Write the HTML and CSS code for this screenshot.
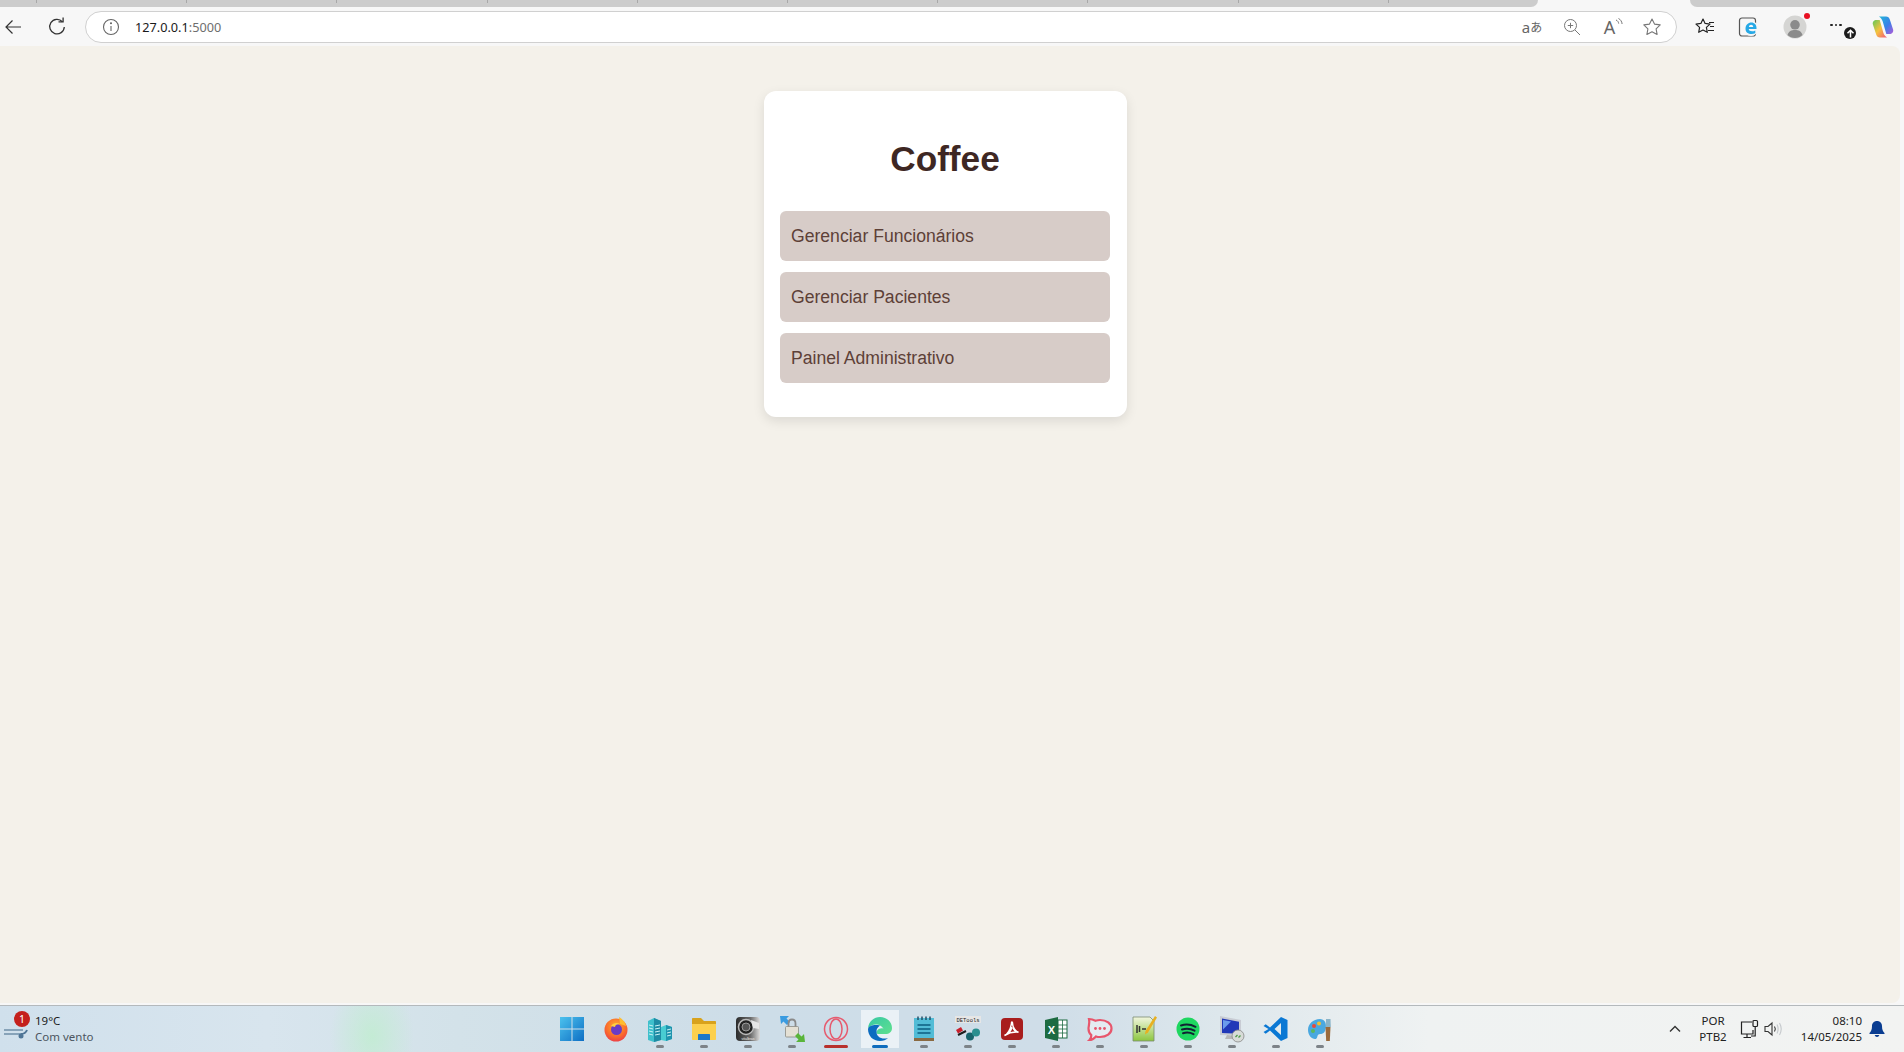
FILE: index.html
```html
<!DOCTYPE html>
<html lang="pt-BR">
<head>
<meta charset="utf-8">
<title>Coffee</title>
<link rel="stylesheet" href="styles.css">
</head>
<body>
<div class="tabstrip">
  <div class="tabs">
    <div class="tab tab-first"></div><div class="tab"></div><div class="tab"></div><div class="tab"></div><div class="tab"></div><div class="tab"></div><div class="tab"></div><div class="tab"></div><div class="tab"></div><div class="tab"></div><div class="tab tab-last"></div>
  </div>
  <div class="tabs-gap"></div>
  <div class="tabs-right"></div>
</div>

<div class="toolbar">
  <div class="tool tool-back">
    <svg width="20" height="20" viewBox="0 0 20 20" fill="none" stroke="#333" stroke-width="1.2"><path d="M18 10H3M9.500 3.500 3 10l6.500 6.500"/></svg>
  </div>
  <div class="tool tool-reload">
    <svg width="20" height="20" viewBox="0 0 20 20" fill="none" stroke="#333" stroke-width="1.3"><path d="M15.400 4.700A7.300 7.300 0 1 0 17.300 10"/><path d="M11.500 4.800h4.600V.5"/></svg>
  </div>
  <div class="address">
    <svg class="addr-info" width="20" height="20" viewBox="0 0 20 20" fill="none" stroke="#666" stroke-width="1.100"><circle cx="10" cy="10" r="7.500"/><path d="M10 9v5"/><circle cx="10" cy="6.300" r=".5" fill="#666"/></svg>
    <span class="url"><span class="url-host">127.0.0.1</span><span class="url-port">:5000</span></span>
    <span class="addr-actions">
      <span class="addr-action translate"><span class="tr-a">a</span><span class="tr-j">あ</span></span>
      <span class="addr-action">
        <svg width="20" height="20" viewBox="0 0 20 20" fill="none" stroke="#777" stroke-width="1"><circle cx="8.500" cy="8.500" r="6"/><path d="M13 13l5 5M8.500 5.800v5.400M5.800 8.500h5.400"/></svg>
      </span>
      <span class="addr-action read"><span class="read-a">A</span>
        <svg class="read-waves" width="9" height="10" viewBox="0 0 9 10" fill="none" stroke="#777" stroke-width="1"><path d="M1 2c1.600.6 2.400 1.800 2.700 3.600M3.500 .5c2 1 3.400 3 3.600 5.500"/></svg>
      </span>
      <span class="addr-action">
        <svg width="20" height="20" viewBox="0 0 20 20" fill="none" stroke="#777" stroke-width="1.100" stroke-linejoin="round"><path d="M10 2l2.500 5.100 5.700.8-4.100 3.900 1 5.600-5.100-2.700-5.100 2.700 1-5.600-4.100-3.900 5.700-.8z"/></svg>
      </span>
    </span>
  </div>
  <div class="tool tool-fav">
    <svg width="22" height="22" viewBox="0 0 22 22" fill="none" stroke="#222" stroke-width="1.200" stroke-linejoin="round"><path d="M9 3l2.100 4.400 4.900.7-3.600 3.300.9 4.900L9 14l-4.300 2.300.9-4.900L2 8.100l4.900-.7z"/><path d="M15 6.500h5M16 10.500h4M14 14.500h6"/></svg>
  </div>
  <div class="tool tool-coll">
    <svg width="24" height="24" viewBox="0 0 24 24" fill="none"><rect x="2.500" y="3" width="16" height="18" rx="2.500" stroke="#555" stroke-width="1.200"/><circle cx="14" cy="13.500" r="7.500" fill="#f7f7f7"/><path d="M8.500 13.500c0-3.600 2.800-6 5.800-6 3.200 0 5.200 2.300 5.200 5.300v1.300h-7.800c.2 2.200 3.500 3 6.600 1.400v2.800c-4.200 1.800-10 .6-9.800-4.800zm3.400-1.600h4.300c0-2.800-4-3-4.300 0z" fill="#27a9e6"/></svg>
  </div>
  <div class="tool tool-profile">
    <svg width="24" height="24" viewBox="0 0 24 24"><circle cx="12" cy="12" r="11.500" fill="#d5d5d3"/><circle cx="12" cy="9.800" r="4.800" fill="#8b8b8b"/><path d="M4.500 20c1-3.700 4-5 7.500-5s6.500 1.300 7.500 5c-2 1.900-4.600 3-7.500 3s-5.500-1.100-7.500-3z" fill="#8b8b8b"/></svg>
    <span class="profile-dot"></span>
  </div>
  <div class="tool tool-more">
    <span class="more-dots"><i></i><i></i><i></i></span>
    <span class="more-badge">
      <svg width="9" height="9" viewBox="0 0 9 9" fill="none" stroke="#fff" stroke-width="1.500"><path d="M4.500 8.500V1.500M1.500 4.300 4.500 1.300l3 3"/></svg>
    </span>
  </div>
  <div class="tool tool-copilot">
    <svg width="24" height="24" viewBox="0 0 24 24">
      <defs>
        <linearGradient id="cpA" x1="0" y1="0" x2="1" y2="1"><stop offset="0" stop-color="#22b8d8"/><stop offset=".55" stop-color="#3a7fe8"/><stop offset="1" stop-color="#b25bd8"/></linearGradient>
        <linearGradient id="cpB" x1="0" y1="0" x2="1" y2="1"><stop offset="0" stop-color="#5fc85a"/><stop offset=".5" stop-color="#f6c23e"/><stop offset="1" stop-color="#f0567c"/></linearGradient>
      </defs>
      <path d="M16 22.500H9c-2 0-3.200-1-3.800-3l-3.300-10C1.200 7 3 5 5.500 5h3.200l3 10.500c.7 3 1.500 5 4.300 7z" fill="url(#cpB)"/>
      <path d="M8 1.500h7c2 0 3.200 1 3.800 3l3.300 10c.7 2.500-1.100 4.500-3.600 4.500h-3.200l-3-10.500c-.7-3-1.500-5-4.300-7z" fill="url(#cpA)"/>
    </svg>
  </div>
</div>

<main class="page">
  <section class="card">
    <h1 class="card-title">Coffee</h1>
    <nav class="menu">
      <a class="menu-item" href="#">Gerenciar Funcionários</a>
      <a class="menu-item" href="#">Gerenciar Pacientes</a>
      <a class="menu-item" href="#">Painel Administrativo</a>
    </nav>
  </section>
</main>

<footer class="taskbar">
  <div class="weather">
    <svg class="wind" width="26" height="14" viewBox="0 0 26 14" fill="none" stroke="#6f8fa8" stroke-width="1.500"><path d="M0 5h19M0 9h17"/><path d="M17 9c3 0 5-1.500 6-4" stroke="#4f7596" stroke-width="2"/><circle cx="17" cy="11" r="2.500" fill="#4f7596" stroke="none"/></svg>
    <span class="weather-badge">1</span>
    <div class="weather-text">
      <span class="weather-temp">19°C</span>
      <span class="weather-desc">Com vento</span>
    </div>
  </div>

  <div class="tasks">
    <div class="task">
      <svg width="28" height="28" viewBox="0 0 28 28"><defs><linearGradient id="win" x1="0" y1="0" x2="1" y2="1"><stop offset="0" stop-color="#4cc2ee"/><stop offset="1" stop-color="#0e6fc4"/></linearGradient></defs><path d="M2 2h11.500v11.500H2zM14.500 2H26v11.500H14.500zM2 14.500h11.500V26H2zM14.500 14.500H26V26H14.500z" fill="url(#win)"/></svg>
      <span class="ind ind-none"></span>
    </div>
    <div class="task">
      <svg width="28" height="28" viewBox="0 0 28 28"><defs><radialGradient id="ff" cx=".5" cy=".35" r=".75"><stop offset="0" stop-color="#ffb22e"/><stop offset=".6" stop-color="#f9682d"/><stop offset="1" stop-color="#e62e52"/></radialGradient></defs><circle cx="14" cy="15" r="11.500" fill="url(#ff)"/><path d="M17 2c3 2 6 4 7 9l-6-2z" fill="#ffbd2f"/><circle cx="14.500" cy="14.500" r="5.500" fill="#6b3bc4"/><path d="M9 11c2-3 6-4 9-2-3 0-5 1-5 3z" fill="#ffcf3f"/></svg>
      <span class="ind ind-none"></span>
    </div>
    <div class="task">
      <svg width="28" height="28" viewBox="0 0 28 28"><path d="M2 6l6-3 7 3v19l-7 2-6-2z" fill="#3fc0cc"/><path d="M8 3l7 3v19l-7 2z" fill="#1f8ba4"/><path d="M15 12l5-2 6 2v12l-6 2-5-1z" fill="#48ccd2"/><path d="M20 10l6 2v12l-6 2z" fill="#1f94ae"/><path d="M3 10l4 1M3 13l4 1M3 16l4 1M3 19l4 1M9 11l5-1M9 14l5-1M9 17l5-1M9 20l5-1M21 15l4-1M21 18l4-1M21 21l4-1" stroke="#c8f2f4" stroke-width="1"/></svg>
      <span class="ind"></span>
    </div>
    <div class="task">
      <svg width="28" height="28" viewBox="0 0 28 28"><path d="M2 4c0-.6.400-1 1-1h8l3 3h11c.6 0 1 .4 1 1v2H2z" fill="#d8a21c"/><path d="M2 9h24v15c0 .6-.4 1-1 1H3c-.6 0-1-.4-1-1z" fill="#fcd04d"/><path d="M8 25v-5c0-.6.400-1 1-1h10c.6 0 1 .4 1 1v5z" fill="#1c78c8"/></svg>
      <span class="ind"></span>
    </div>
    <div class="task">
      <svg width="28" height="28" viewBox="0 0 28 28"><defs><linearGradient id="vb" x1="0" y1="0" x2="1" y2="0"><stop offset="0" stop-color="#2c2c2c"/><stop offset=".6" stop-color="#6a6a6a"/><stop offset="1" stop-color="#dcdcdc"/></linearGradient></defs><rect x="2" y="2" width="24" height="24" rx="4" fill="url(#vb)"/><circle cx="12" cy="12" r="7.500" fill="#222" stroke="#bbb" stroke-width="1.500"/><circle cx="12" cy="12" r="4" fill="#555" stroke="#999" stroke-width="1"/><path d="M17 5l8 3v6l-6-1z" fill="#e6e6e6"/><text class="tiny-label" x="14" y="24.500" text-anchor="middle">vitalbras</text></svg>
      <span class="ind"></span>
    </div>
    <div class="task">
      <svg width="28" height="28" viewBox="0 0 28 28"><path d="M2 1h9L8.500 3.500 12 7l-3 3-3.500-3.500L3 9z" fill="#3a9be0"/><path d="M10.500 12V8.500c0-2.500 1.500-4 3.500-4s3.500 1.500 3.500 4V12" fill="none" stroke="#8a8a8a" stroke-width="1.800"/><rect x="7.500" y="11.500" width="13" height="10.500" rx="1" fill="#e4e0d4" stroke="#8c8c84" stroke-width=".8"/><path d="M27 27h-9l2.500-2.500L17 21l3-3 3.500 3.500L26 19z" fill="#59b53a"/></svg>
      <span class="ind"></span>
    </div>
    <div class="task">
      <svg width="28" height="28" viewBox="0 0 28 28" fill="none" stroke="#e65a6e" stroke-width="1.500"><circle cx="14" cy="14" r="11.500"/><ellipse cx="14" cy="14" rx="6" ry="10"/></svg>
      <span class="ind ind-opera"></span>
    </div>
    <div class="task task-active">
      <svg width="28" height="28" viewBox="0 0 28 28"><defs><linearGradient id="edA" x1="0" y1="0" x2="1" y2="1"><stop offset="0" stop-color="#38c8a4"/><stop offset="1" stop-color="#5fe08e"/></linearGradient></defs><path d="M2 13C3 6 8 2 14 2c7 0 12 5 12 11 0 4-3 6-6.500 6H12c-1.500 0-2-1-1.500-2.500C12 13 18 12 18 15c-1.500-5-8-7-12.500-4.500z" fill="url(#edA)"/><path d="M2 14c0 7 5 12 12 12 3.500 0 6-1 8-3-6 2-12-1-11.500-7 .2-2.500 1.500-4 3.500-5.500C9 9.500 3 10 2 14z" fill="#0c6cc0"/></svg>
      <span class="ind ind-edge"></span>
    </div>
    <div class="task">
      <svg width="28" height="28" viewBox="0 0 28 28"><rect x="4" y="3" width="20" height="21" fill="#52bcd6"/><rect x="4" y="23" width="20" height="3" fill="#8a6a42"/><path d="M8 1.500v3.500M12 1.500v3.500M16 1.500v3.500M20 1.500v3.500" stroke="#22506a" stroke-width="1.500"/><path d="M7.500 10h13M7.500 14h13M7.500 18h13" stroke="#0c5e80" stroke-width="1.500"/></svg>
      <span class="ind"></span>
    </div>
    <div class="task">
      <svg width="28" height="28" viewBox="0 0 28 28"><rect x="1" y="1" width="26" height="7" fill="#e6e6e6"/><text class="detools-label" x="14" y="6.500" text-anchor="middle">DETools</text><path d="M4 20l8-4" stroke="#1c1c1c" stroke-width="2"/><path d="M2 15l5-3 2 3.500-5 3z" fill="#c8202c"/><circle cx="16" cy="21.500" r="4" fill="#17646c"/><circle cx="22" cy="17.500" r="4" fill="#2a8f8f"/></svg>
      <span class="ind"></span>
    </div>
    <div class="task">
      <svg width="28" height="28" viewBox="0 0 28 28"><rect x="3" y="3" width="22" height="22" rx="4" fill="#a81d1d"/><path d="M6.500 20.500c3-1 6-6 7-12-.2-2 1-2 1-.3 0 4 3 8 6 9-5-.5-10 .8-14 3.300zM14 12c-.5 2-1.500 4-3 6M15 13c1 1.700 2 3 3.500 4" fill="none" stroke="#fff" stroke-width="1.500"/></svg>
      <span class="ind"></span>
    </div>
    <div class="task">
      <svg width="28" height="28" viewBox="0 0 28 28"><path d="M3 5l13-3v24l-13-3z" fill="#1d6b41"/><rect x="16" y="5" width="9" height="18" fill="#fff" stroke="#1d6b41" stroke-width="1"/><path d="M16 10h9M16 14h9M16 18h9M20.500 5v18" stroke="#1d6b41" stroke-width=".8"/><text class="excel-x" x="9.500" y="18.500" text-anchor="middle">X</text></svg>
      <span class="ind"></span>
    </div>
    <div class="task">
      <svg width="28" height="28" viewBox="0 0 28 28"><path d="M14 5c6.500 0 11.500 3.500 11.500 8.500S20.500 22 14 22c-1.500 0-3-.2-4-.6C8 23.500 6 25 3.500 25c1.500-1.500 2-3 1.800-5C3.500 18.500 2.500 16 2.500 13.500 2.500 11 4 8 3 4c2.500 0 5 1 6.500 1.800 1.500-.5 3-.8 4.500-.8z" fill="#fff" fill-opacity=".4" stroke="#e8566c" stroke-width="2.200"/><circle cx="9.500" cy="13.500" r="1.400" fill="#e8566c"/><circle cx="14" cy="13.500" r="1.400" fill="#e8566c"/><circle cx="18.500" cy="13.500" r="1.400" fill="#e8566c"/></svg>
      <span class="ind"></span>
    </div>
    <div class="task">
      <svg width="28" height="28" viewBox="0 0 28 28"><defs><linearGradient id="npp" x1="0" y1="0" x2="0" y2="1"><stop offset="0" stop-color="#f2f6df"/><stop offset="1" stop-color="#8cc63f"/></linearGradient></defs><path d="M3 2h17l4 4v20H3z" fill="url(#npp)" stroke="#7a8a70" stroke-width=".8"/><path d="M7 10v8M9.500 11v6M12 14h4" stroke="#333" stroke-width="1.500"/><path d="M25 1l2 1.500-9 15-3 2 .5-3.500z" fill="#e8b020"/></svg>
      <span class="ind"></span>
    </div>
    <div class="task">
      <svg width="28" height="28" viewBox="0 0 28 28" fill="none"><circle cx="14" cy="14" r="11.500" fill="#1ed760"/><path d="M7 10.500c5-1.500 10-1 14.500 1.300M8 14.500c4.500-1.200 9-.7 12.500 1.200M9 18.200c3.500-1 7.500-.6 10.500 1" stroke="#123" stroke-width="2" stroke-linecap="round"/></svg>
      <span class="ind"></span>
    </div>
    <div class="task">
      <svg width="28" height="28" viewBox="0 0 28 28"><path d="M2 1l21 4v16L2 20z" fill="#c8ccd4"/><path d="M4 3.500l17 3.200v12L4 18z" fill="#2038b8"/><path d="M5 5l8 1.500-8 8z" fill="#6a9cec"/><path d="M9 20l8 1v3H7z" fill="#b8b8b8"/><circle cx="20" cy="21" r="6" fill="#d8dcd8" stroke="#888" stroke-width=".8"/><path d="M17.500 22l2-2M20.500 22.500l2-2" stroke="#4c9a48" stroke-width="1.300"/></svg>
      <span class="ind"></span>
    </div>
    <div class="task">
      <svg width="28" height="28" viewBox="0 0 28 28"><path d="M19 2l6.500 3v18L19 26 8 15.500l-4.300 3.300L1.500 17l5-3-5-3 2.200-1.800L8 12.500zM19 8l-6.500 6 6.500 6z" fill="#0a78d4" fill-rule="evenodd"/></svg>
      <span class="ind"></span>
    </div>
    <div class="task">
      <svg width="28" height="28" viewBox="0 0 28 28"><path d="M14 4C7 4 2 9 2 15c0 5 3.500 9 7 9 2.500 0 2-2.500 3-4s5-.5 6.500-3C21 13 21 4 14 4z" fill="#4aa8e0"/><circle cx="8" cy="11" r="2" fill="#e84b3c"/><circle cx="13" cy="8.500" r="2" fill="#f4c030"/><circle cx="7" cy="16" r="2" fill="#5cb85c"/><path d="M19.500 12h5l-.7 14h-3.600z" fill="#9a6a3c"/><path d="M20 4h4.500l.3 8h-5z" fill="#8ab4c8"/></svg>
      <span class="ind"></span>
    </div>
  </div>

  <div class="tray">
    <div class="tray-chevron">
      <svg width="14" height="10" viewBox="0 0 14 10" fill="none" stroke="#333" stroke-width="1.400"><path d="M2 7.500l5-5 5 5"/></svg>
    </div>
    <div class="tray-lang"><span>POR</span><span>PTB2</span></div>
    <div class="tray-net">
      <svg width="20" height="20" viewBox="0 0 20 20" fill="none" stroke="#222" stroke-width="1.200"><path d="M12 3H1.500v12H13v-4"/><path d="M7 15v3M3.500 18.500H11"/><rect x="13" y="1.500" width="4.500" height="6" rx="1"/><path d="M15.200 7.500V17H11"/></svg>
    </div>
    <div class="tray-vol">
      <svg width="20" height="20" viewBox="0 0 20 20" fill="none" stroke="#333" stroke-width="1.100"><path d="M2 7.500h3L9 4v12l-4-3.500H2z"/><path d="M11.500 7.500c1 1.500 1 3.500 0 5" /><path d="M14 5.500c1.500 3 1.500 6 0 9M16.500 4c2 3.500 2 8.500 0 12" stroke="#c4c8cc"/></svg>
    </div>
    <div class="tray-clock"><span>08:10</span><span>14/05/2025</span></div>
    <div class="tray-bell">
      <svg width="16" height="18" viewBox="0 0 16 18" fill="#0a3d91"><path d="M8 1c3 0 5 2.200 5 5.200 0 3.800 1.200 5.300 2.500 6.800v1h-15v-1C1.800 11.500 3 10 3 6.200 3 3.200 5 1 8 1z"/><path d="M5.700 15h4.600c-.4 1.300-1.200 2-2.300 2s-1.900-.7-2.300-2z"/></svg>
    </div>
  </div>
</footer>
</body>
</html>
```

FILE: styles.css
```css
* { box-sizing: border-box; }

html, body {
  margin: 0;
  height: 100%;
}

body {
  display: flex;
  flex-direction: column;
  height: 1052px;
  overflow: hidden;
  background: #f7f7f7;
  font-family: "Noto Sans", "Liberation Sans", sans-serif;
  color: #222;
}

/* Tab strip */
.tabstrip {
  display: flex;
  flex: 0 0 7px;
  height: 7px;
}
.tabs {
  display: flex;
  width: 1538px;
  background: #cccccc;
  border-bottom-right-radius: 7px;
  overflow: hidden;
}
.tab {
  flex: 0 0 150.2px;
  height: 3px;
  border-right: 1px solid #a8a8a8;
}
.tab-first { flex-basis: 37px; }
.tab-last { flex: 1; border-right: 0; }
.tabs-gap { flex: 1; }
.tabs-right {
  width: 214px;
  background: #cccccc;
  border-bottom-left-radius: 7px;
}

/* Toolbar */
.toolbar {
  display: flex;
  align-items: center;
  flex: 0 0 39px;
  padding-top: 1px;
}
.tool {
  position: relative;
  display: flex;
  align-items: center;
  justify-content: center;
  height: 32px;
}
.tool-back { width: 26px; }
.tool-reload { width: 44px; margin: 0 6px 0 9px; }
.tool-fav { width: 44px; margin-left: 6px; }
.tool-coll { width: 44px; }
.tool-profile { width: 48px; }
.tool-more { width: 42px; }
.tool-copilot { width: 43px; }

.address {
  flex: 1;
  display: flex;
  align-items: center;
  height: 32px;
  padding: 0 4px 0 15px;
  background: #fff;
  border: 1px solid #d0d0d0;
  border-radius: 16px;
}
.addr-info { margin-right: 14px; }
.url { font-size: 12.7px; }
.url-host { color: #1a1a1a; }
.url-port { color: #6e6e6e; }
.addr-actions {
  display: flex;
  margin-left: auto;
}
.addr-action {
  position: relative;
  display: flex;
  align-items: center;
  justify-content: center;
  width: 40px;
  height: 24px;
  color: #666;
}
.tr-a { font-size: 15px; line-height: 1; }
.tr-j {
  font-family: "Noto Sans CJK JP", sans-serif;
  font-size: 12px;
  line-height: 1;
}
.read-a { font-size: 18px; line-height: 1; margin-right: 5px; }
.read-waves { position: absolute; left: 23px; top: 3px; }

.profile-dot {
  position: absolute;
  top: 2px;
  right: 9px;
  width: 6px;
  height: 6px;
  border-radius: 50%;
  background: #e81123;
}
.more-dots {
  display: flex;
  gap: 2px;
  margin: -4px 8px 0 0;
}
.more-dots i {
  width: 2.500px;
  height: 2.500px;
  border-radius: 50%;
  background: #222;
}
.more-badge {
  position: absolute;
  left: 25px;
  top: 16px;
  display: flex;
  align-items: center;
  justify-content: center;
  width: 12px;
  height: 12px;
  border-radius: 50%;
  background: #1c1c1c;
}

/* Page */
.page {
  flex: 1;
  min-height: 0;
  display: flex;
  justify-content: center;
  align-items: flex-start;
  margin-right: 4px;
  padding: 45px 9px 0 0;
  background: #f4f1ea;
  border-radius: 0 8px 8px 0;
  font-family: "Liberation Sans", Arial, sans-serif;
}
.card {
  width: 363px;
  height: 326px;
  padding: 34px 17px 34px 16px;
  background: #fff;
  border-radius: 12px;
  box-shadow: 0 4px 12px rgba(0, 0, 0, 0.1);
}
.card-title {
  margin: 14px 0 32px;
  font-size: 35.2px;
  line-height: 40px;
  font-weight: 700;
  text-align: center;
  color: #3e2723;
}
.menu {
  display: flex;
  flex-direction: column;
  gap: 11px;
}
.menu-item {
  display: block;
  height: 50px;
  padding: 0 11px;
  font-size: 17.6px;
  line-height: 50px;
  color: #5d4037;
  background: #d7ccc8;
  border-radius: 6px;
  text-decoration: none;
}

/* Taskbar */
.taskbar {
  display: flex;
  flex: 0 0 47px;
  margin-top: 2px;
  border-top: 1px solid #b4b9bc;
  background:
    radial-gradient(ellipse 42px 60px at 372px 30px, rgba(190, 238, 205, 0.75), rgba(190, 238, 205, 0) 100%),
    linear-gradient(90deg, #d0e0ec 0%, #d8e5ee 14%, #d3e2e9 24%, #cddde8 40%, #cfdde8 55%, #dde7ec 64%, #eff2f2 75%, #f2f3f2 100%);
}
.weather {
  position: relative;
  display: flex;
  align-items: center;
  flex: 0 0 550px;
  padding-left: 4px;
}
.wind { margin: 6px 5px 0 0; }
.weather-badge {
  position: absolute;
  left: 14px;
  top: 5px;
  width: 16px;
  height: 16px;
  border-radius: 50%;
  background: #c4201c;
  color: #fff;
  font-size: 10.500px;
  line-height: 16px;
  text-align: center;
}
.weather-text {
  display: flex;
  flex-direction: column;
  gap: 1px;
  margin-top: -1px;
  font-size: 11.500px;
  line-height: 15px;
}
.weather-temp { color: #1a1a1a; }
.weather-desc { color: #4c5560; }

.tasks { display: flex; }
.task {
  display: flex;
  flex-direction: column;
  align-items: center;
  width: 44px;
  padding-top: 9px;
}
.task-active {
  background: linear-gradient(#eaf1f6, #eaf1f6) center 4px / 38px 38px no-repeat;
}
.ind {
  width: 8px;
  height: 3px;
  margin-top: 2px;
  border-radius: 2px;
  background: #7d8388;
}
.ind-none { background: transparent; }
.ind-opera { width: 24px; background: #b8302c; }
.ind-edge { width: 16px; background: #0f6cbd; }

.tiny-label {
  font-family: "Liberation Sans", sans-serif;
  font-size: 3.500px;
  fill: #eee;
}
.detools-label {
  font-family: "Liberation Mono", monospace;
  font-size: 5.500px;
  fill: #222;
}
.excel-x {
  font-family: "Liberation Sans", sans-serif;
  font-size: 11px;
  font-weight: 700;
  fill: #fff;
}

.tray {
  display: flex;
  align-items: center;
  margin-left: auto;
  padding-right: 12px;
  font-size: 11.500px;
  line-height: 16px;
  color: #222;
}
.tray > div {
  display: flex;
  align-items: center;
  justify-content: center;
}
.tray-chevron { width: 30px; }
.tray-lang {
  flex-direction: column;
  width: 46px;
  margin-right: 2px;
}
.tray-net { width: 24px; }
.tray-vol { width: 22px; }
.tray > .tray-clock {
  flex-direction: column;
  align-items: flex-end;
  width: 78px;
}
.tray-bell { width: 30px; }
```
